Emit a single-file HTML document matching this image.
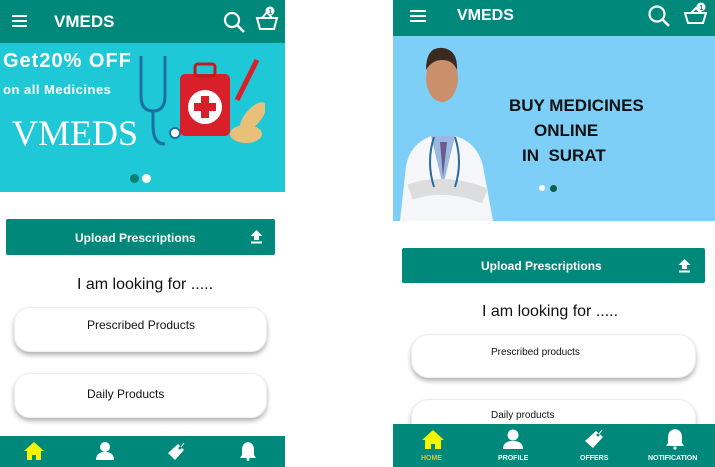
<!DOCTYPE html>
<html><head><style>
*{margin:0;padding:0;box-sizing:border-box}
body{width:715px;height:467px;background:#fff;position:relative;overflow:hidden;font-family:"Liberation Sans",sans-serif}
.a{position:absolute}
.teal{background:#00887a}
.card{position:absolute;background:#fff;border-radius:16px;box-shadow:0 3px 5px rgba(0,0,0,.3);border:1px solid #eee}
.wt{color:#fff;font-weight:bold}
</style></head><body>
<!-- LEFT -->
<div class="a teal" style="left:0;top:0;width:285px;height:43px"></div>
<div class="a" style="left:12px;top:15px;width:15px;height:2px;background:#fff;box-shadow:0 5px 0 #fff,0 10px 0 #fff"></div>
<div class="a wt" style="left:54px;top:12px;font-size:17px">VMEDS</div>
<svg class="a" style="left:223px;top:11px" width="22" height="22"><circle cx="9" cy="9" r="7" stroke="#fff" stroke-width="2.2" fill="none"/><line x1="14" y1="14" x2="21" y2="21" stroke="#fff" stroke-width="2.6"/></svg>
<svg class="a" style="left:255px;top:6px" width="24" height="26"><path d="M2 12h20l-3 11H5z" stroke="#fff" stroke-width="2" fill="none"/><path d="M7 12l5-6 5 6" stroke="#fff" stroke-width="2" fill="none"/><circle cx="15" cy="5" r="4.5" fill="#fff"/><text x="13.3" y="8" font-size="7" font-weight="bold" fill="#00887a">1</text></svg>
<div class="a" style="left:0;top:43px;width:285px;height:149px;background:#1fc8d6"></div>
<div class="a wt" style="left:3px;top:50px;font-size:20px;letter-spacing:1px">Get20% OFF</div>
<div class="a wt" style="left:3px;top:82px;font-size:13px;letter-spacing:.5px">on all Medicines</div>
<div class="a" style="left:12px;top:112px;font-family:'Liberation Serif',serif;font-size:36px;color:#fff">VMEDS</div>
<svg class="a" style="left:135px;top:52px" width="130" height="95"><path d="M6 4v40q0 15 12 15t12-15V4" stroke="#1d6fa3" stroke-width="3" fill="none"/><path d="M18 59v15q0 18 12 18" stroke="#1d6fa3" stroke-width="3" fill="none"/><circle cx="40" cy="81" r="5" fill="#fff" stroke="#1d6fa3" stroke-width="2"/><rect x="45" y="22" width="50" height="62" rx="5" fill="#d9202a"/><rect x="60" y="12" width="20" height="12" rx="3" fill="none" stroke="#c01a22" stroke-width="3"/><circle cx="70" cy="55" r="17" fill="#fff"/><path d="M66 44h8v7h7v8h-7v7h-8v-7h-7v-8h7z" fill="#d9202a"/><path d="M122 8l-20 40" stroke="#d9202a" stroke-width="5"/><ellipse cx="111" cy="82" rx="16" ry="9" fill="#e8c07a"/><ellipse cx="118" cy="65" rx="8" ry="18" fill="#e8c07a" transform="rotate(40 118 65)"/></svg>
<div class="a" style="left:130px;top:174px;width:9px;height:9px;border-radius:50%;background:#0a8070"></div>
<div class="a" style="left:142px;top:174px;width:9px;height:9px;border-radius:50%;background:#fff"></div>
<div class="a teal" style="left:6px;top:219px;width:269px;height:36px;border-radius:2px"></div>
<div class="a wt" style="left:75px;top:231px;font-size:12px">Upload Prescriptions</div>
<svg class="a" style="left:250px;top:230px" width="13" height="14"><path d="M6.5 0l6 6H9v4H4V6H0.5z" fill="#fff"/><rect x="1" y="11.5" width="11" height="2" fill="#fff"/></svg>
<div class="a" style="left:0;width:285px;text-align:center;top:276px;font-size:16px;color:#111;padding-left:5px">I am looking for .....</div>
<div class="card" style="left:14px;top:307px;width:253px;height:45px"></div>
<div class="a" style="left:87px;top:318px;font-size:12px;color:#111">Prescribed Products</div>
<div class="card" style="left:14px;top:373px;width:253px;height:45px"></div>
<div class="a" style="left:87px;top:387px;font-size:12px;color:#111">Daily Products</div>
<div class="a teal" style="left:0;top:436px;width:285px;height:31px"></div>
<svg class="a" style="left:23px;top:441px" width="22" height="20"><path d="M11 1L1 10h3v9h5v-5h4v5h5v-9h3z" fill="#f5f500"/></svg>
<svg class="a" style="left:95px;top:441px" width="20" height="20"><circle cx="10" cy="6" r="5" fill="#fff"/><path d="M1 19q0-8 9-8t9 8z" fill="#fff"/></svg>
<svg class="a" style="left:166px;top:442px" width="20" height="20"><path d="M12 2l6 6-9 10-7-7z" fill="#fff"/><circle cx="14" cy="6" r="1.5" fill="#00887a"/><path d="M15 5l3-4" stroke="#fff"/></svg>
<svg class="a" style="left:238px;top:441px" width="20" height="20"><path d="M10 1q6 1 6 8v5l2 3H2l2-3V9q0-7 6-8z" fill="#fff"/><circle cx="10" cy="18.5" r="1.5" fill="#fff"/></svg>
<!-- RIGHT -->
<div class="a teal" style="left:393px;top:0;width:322px;height:36px"></div>
<div class="a" style="left:410px;top:10px;width:16px;height:2px;background:#fff;box-shadow:0 5px 0 #fff,0 10px 0 #fff"></div>
<div class="a wt" style="left:457px;top:7px;font-size:16px">VMEDS</div>
<svg class="a" style="left:647px;top:4px" width="24" height="24"><circle cx="10" cy="10" r="7.5" stroke="#fff" stroke-width="2.2" fill="none"/><line x1="15" y1="15" x2="22" y2="22" stroke="#fff" stroke-width="2.6"/></svg>
<svg class="a" style="left:683px;top:2px" width="26" height="24"><path d="M2 11h21l-3 10H5z" stroke="#fff" stroke-width="2" fill="none"/><path d="M8 11l5-5 5 5" stroke="#fff" stroke-width="2" fill="none"/><circle cx="18" cy="5" r="4.5" fill="#fff"/><text x="16.3" y="8" font-size="7" font-weight="bold" fill="#00887a">1</text></svg>
<div class="a" style="left:393px;top:36px;width:322px;height:185px;background:#7dcff8"></div>
<svg class="a" style="left:400px;top:42px" width="95" height="179"><path d="M0 179l6-55q4-22 25-30l12 4 12-4q22 6 28 30l10 55z" fill="#f4f6f8"/><ellipse cx="42" cy="36" rx="16" ry="24" fill="#c9906b"/><path d="M26 28q0-24 17-22q15 2 14 22q-4-10-15-10q-10 0-16 10z" fill="#3a2a20"/><path d="M31 94l12 50 12-50z" fill="#9ab8e0"/><path d="M40 100l3 35 4-35z" fill="#6a5b8a"/><path d="M10 150q35-12 75 4" stroke="#ddd" stroke-width="16" fill="none"/><path d="M34 95q-8 25 0 50M55 95q8 25 0 50" stroke="#2a6aa0" stroke-width="2" fill="none"/></svg>
<div class="a" style="left:509px;top:93px;font-size:17px;font-weight:bold;color:#111;line-height:25px">BUY MEDICINES<br><span style="margin-left:25px">ONLINE</span><br><span style="margin-left:13px">IN&nbsp; SURAT</span></div>
<div class="a" style="left:539px;top:185px;width:6px;height:6px;border-radius:50%;background:#fff"></div>
<div class="a" style="left:550px;top:185px;width:7px;height:7px;border-radius:50%;background:#0d5e4a"></div>
<div class="a teal" style="left:402px;top:248px;width:303px;height:35px;border-radius:2px"></div>
<div class="a wt" style="left:481px;top:259px;font-size:12px">Upload Prescriptions</div>
<svg class="a" style="left:678px;top:259px" width="13" height="14"><path d="M6.5 0l6 6H9v4H4V6H0.5z" fill="#fff"/><rect x="1" y="11.5" width="11" height="2" fill="#fff"/></svg>
<div class="a" style="left:482px;top:303px;font-size:16px;color:#111">I am looking for .....</div>
<div class="card" style="left:411px;top:334px;width:285px;height:44px;border-radius:18px"></div>
<div class="a" style="left:491px;top:347px;font-size:10px;color:#111">Prescribed products</div>
<div class="card" style="left:411px;top:399px;width:285px;height:44px;border-radius:18px"></div>
<div class="a" style="left:491px;top:410px;font-size:10px;color:#111">Daily products</div>
<div class="a teal" style="left:393px;top:424px;width:322px;height:43px"></div>
<svg class="a" style="left:421px;top:429px" width="24" height="21"><path d="M12 1L1 11h3v9h6v-5h4v5h6v-9h3z" fill="#f5f500"/></svg>
<svg class="a" style="left:502px;top:429px" width="22" height="21"><circle cx="11" cy="6" r="5.5" fill="#fff"/><path d="M1 20q0-8 10-8t10 8z" fill="#fff"/></svg>
<svg class="a" style="left:583px;top:429px" width="22" height="21"><path d="M13 2l7 6-10 11-8-7z" fill="#fff"/><circle cx="15" cy="6" r="1.5" fill="#00887a"/><path d="M16 5l3-4" stroke="#fff"/></svg>
<svg class="a" style="left:664px;top:428px" width="22" height="22"><path d="M11 1q7 1 7 9v5l2 3H2l2-3v-5q0-8 7-9z" fill="#fff"/><circle cx="11" cy="20" r="1.6" fill="#fff"/></svg>
<div class="a" style="left:421px;top:455px;font-size:7px;font-weight:bold;color:#e6c020">HOME</div>
<div class="a wt" style="left:498px;top:455px;font-size:7px">PROFILE</div>
<div class="a wt" style="left:580px;top:455px;font-size:7px">OFFERS</div>
<div class="a wt" style="left:648px;top:455px;font-size:7px">NOTIFICATION</div>
</body></html>
